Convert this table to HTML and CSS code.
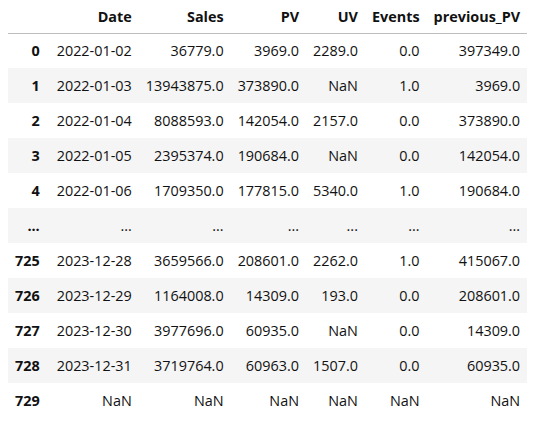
FILE: index.html
```html
<!DOCTYPE html>
<html>
<head>
<meta charset="utf-8">
<link rel="stylesheet" href="styles.css">
</head>
<body>
<table class="df">
<thead>
<tr><th></th><th class="date">Date</th><th>Sales</th><th>PV</th><th>UV</th><th>Events</th><th>previous_PV</th></tr>
</thead>
<tbody>
<tr><th>0</th><td class="date">2022-01-02</td><td>36779.0</td><td>3969.0</td><td>2289.0</td><td>0.0</td><td>397349.0</td></tr>
<tr><th>1</th><td class="date">2022-01-03</td><td>13943875.0</td><td>373890.0</td><td>NaN</td><td>1.0</td><td>3969.0</td></tr>
<tr><th>2</th><td class="date">2022-01-04</td><td>8088593.0</td><td>142054.0</td><td>2157.0</td><td>0.0</td><td>373890.0</td></tr>
<tr><th>3</th><td class="date">2022-01-05</td><td>2395374.0</td><td>190684.0</td><td>NaN</td><td>0.0</td><td>142054.0</td></tr>
<tr><th>4</th><td class="date">2022-01-06</td><td>1709350.0</td><td>177815.0</td><td>5340.0</td><td>1.0</td><td>190684.0</td></tr>
<tr><th>...</th><td class="date">...</td><td>...</td><td>...</td><td>...</td><td>...</td><td>...</td></tr>
<tr><th>725</th><td class="date">2023-12-28</td><td>3659566.0</td><td>208601.0</td><td>2262.0</td><td>1.0</td><td>415067.0</td></tr>
<tr><th>726</th><td class="date">2023-12-29</td><td>1164008.0</td><td>14309.0</td><td>193.0</td><td>0.0</td><td>208601.0</td></tr>
<tr><th>727</th><td class="date">2023-12-30</td><td>3977696.0</td><td>60935.0</td><td>NaN</td><td>0.0</td><td>14309.0</td></tr>
<tr><th>728</th><td class="date">2023-12-31</td><td>3719764.0</td><td>60963.0</td><td>1507.0</td><td>0.0</td><td>60935.0</td></tr>
<tr><th>729</th><td class="date">NaN</td><td>NaN</td><td>NaN</td><td>NaN</td><td>NaN</td><td>NaN</td></tr>
</tbody>
</table>
</body>
</html>
```
FILE: styles.css
```css
html, body {
  background: #ffffff;
}
body {
  margin: 0;
  padding: 0 8px;
  font-family: "Open Sans", "Noto Sans", sans-serif;
  font-size: 14.4px;
  color: #111111;
}
.df {
  border-collapse: collapse;
  border-spacing: 0;
}
.df th, .df td {
  text-align: right;
  vertical-align: middle;
  padding: 0 7px;
  white-space: nowrap;
  border: none;
}
.df th {
  font-weight: bold;
}
.df .date {
  padding-left: 10px;
  padding-right: 7px;
}
.df thead tr {
  height: 33px;
  border-bottom: 1px solid #bdbdbd;
}
.df tbody tr {
  height: 35px;
}
.df tbody tr:nth-child(odd) {
  background: #ffffff;
}
.df tbody tr:nth-child(even) {
  background: #f5f5f5;
}
```
